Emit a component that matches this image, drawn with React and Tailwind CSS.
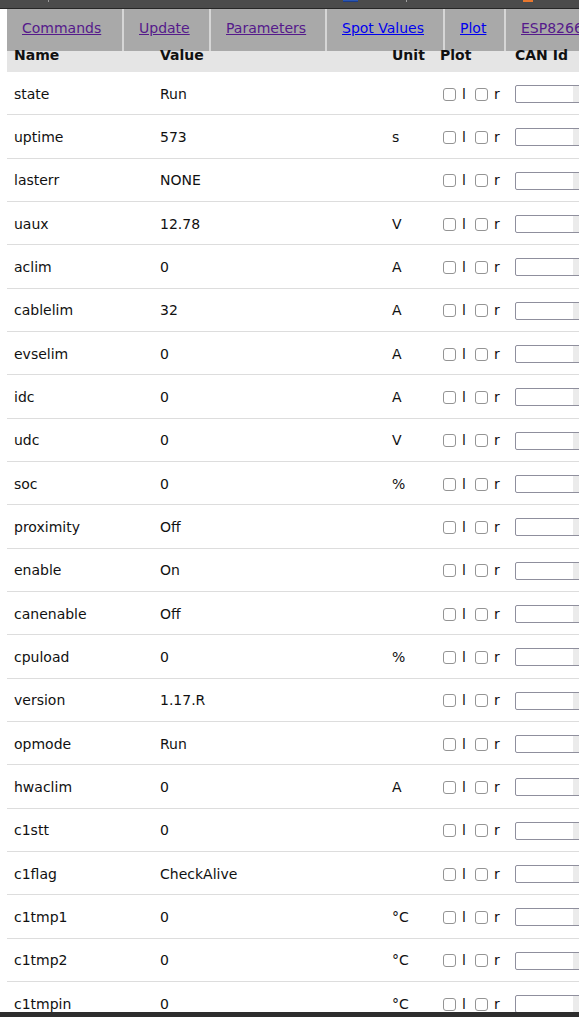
import React from 'react';

const tabs = [
  { label: 'Commands', width: 'w-[115px]', visited: true },
  { label: 'Update', width: 'w-[87px]', visited: true },
  { label: 'Parameters', width: 'w-[116px]', visited: true },
  { label: 'Spot Values', width: 'w-[118px]', visited: false },
  { label: 'Plot', width: 'w-[61px]', visited: false },
  { label: 'ESP8266', width: 'w-[120px]', visited: true },
];

const spotValues = [
  ['state', 'Run', ''],
  ['uptime', '573', 's'],
  ['lasterr', 'NONE', ''],
  ['uaux', '12.78', 'V'],
  ['aclim', '0', 'A'],
  ['cablelim', '32', 'A'],
  ['evselim', '0', 'A'],
  ['idc', '0', 'A'],
  ['udc', '0', 'V'],
  ['soc', '0', '%'],
  ['proximity', 'Off', ''],
  ['enable', 'On', ''],
  ['canenable', 'Off', ''],
  ['cpuload', '0', '%'],
  ['version', '1.17.R', ''],
  ['opmode', 'Run', ''],
  ['hwaclim', '0', 'A'],
  ['c1stt', '0', ''],
  ['c1flag', 'CheckAlive', ''],
  ['c1tmp1', '0', '°C'],
  ['c1tmp2', '0', '°C'],
  ['c1tmpin', '0', '°C'],
];

// shared column template: Name | Value | Unit | Plot | CAN Id
const cols = 'grid grid-cols-[146px_232px_48px_75px_1fr]';

const Box = () => (
  <span className="block w-[13px] h-[13px] border border-[#949494] rounded-[3px] bg-white" />
);

const Row = ({ name, value, unit }) => (
  <div className={`${cols} h-[43.33px] shrink-0 items-center pt-[2px] border-b border-[#dddddd]`}>
    <div className="pl-[7px]">{name}</div>
    <div className="pl-[7px]">{value}</div>
    <div className="pl-[7px]">{unit}</div>
    <div className="flex items-center pl-[10px]">
      <Box />
      <span className="ml-[6px] mr-[9px]">l</span>
      <Box />
      <span className="ml-[6px]">r</span>
    </div>
    <div className="pl-[7px]">
      {/* number input, spinner area starts at the right edge of the window */}
      <div className="flex w-[110px] h-[18px] border border-[#8f8f9d] rounded-[2px] bg-white">
        <div className="w-[57px]" />
        <div className="w-[14px] bg-[#ebebeb]" />
      </div>
    </div>
  </div>
);

const App = () => {
  return (
    <div
      className="w-[579px] h-[1017px] flex flex-col overflow-hidden bg-white text-[14px] text-[#111]"
      style={{ fontFamily: '"DejaVu Sans", Verdana, sans-serif' }}
    >
      {/* strip of the window bar above */}
      <div className="relative h-[9px] shrink-0 bg-[#4b4b4b] border-b border-[#262626]">
        <span className="absolute left-[48px] top-0 w-[1px] h-[2px] bg-[#9a9a9a]" />
        <span className="absolute left-[343px] top-0 w-[15px] h-[2px] bg-[#2a56b3] border-b border-[#1c3c88]" />
        <span className="absolute left-[406px] top-0 w-[1px] h-[2px] bg-[#a0a0a0]" />
        <span className="absolute left-[523px] top-0 w-[10px] h-[2px] bg-[#e8772e]" />
      </div>

      <div className="flex-1 flex flex-col pl-[7px] overflow-hidden">
        {/* tab bar */}
        <div className="flex h-[42px] shrink-0 bg-[#a9a9a9]">
          {tabs.map((tab, i) => (
            <div
              key={tab.label}
              className={`${tab.width} shrink-0 flex items-center pl-[15px] pb-[4px] ${
                i > 0 ? 'border-l-2 border-[#d6d6d6]' : ''
              }`}
            >
              <a
                href="#"
                className={`underline whitespace-nowrap ${
                  tab.visited ? 'text-[#551a8b]' : 'text-[#0000ee]'
                }`}
              >
                {tab.label}
              </a>
            </div>
          ))}
        </div>

        {/* header row, mostly hidden below the tabs */}
        <div className={`${cols} h-[21px] shrink-0 bg-[#e5e5e5] font-bold leading-[8px]`}>
          <div className="pl-[7px]">Name</div>
          <div className="pl-[7px]">Value</div>
          <div className="pl-[7px]">Unit</div>
          <div className="pl-[7px]">Plot</div>
          <div className="pl-[7px] whitespace-nowrap">CAN Id</div>
        </div>

        {spotValues.map(([name, value, unit]) => (
          <Row key={name} name={name} value={value} unit={unit} />
        ))}
      </div>

      <div className="h-[5px] shrink-0 bg-[#2e2e2e]" />
    </div>
  );
};

export default App;
